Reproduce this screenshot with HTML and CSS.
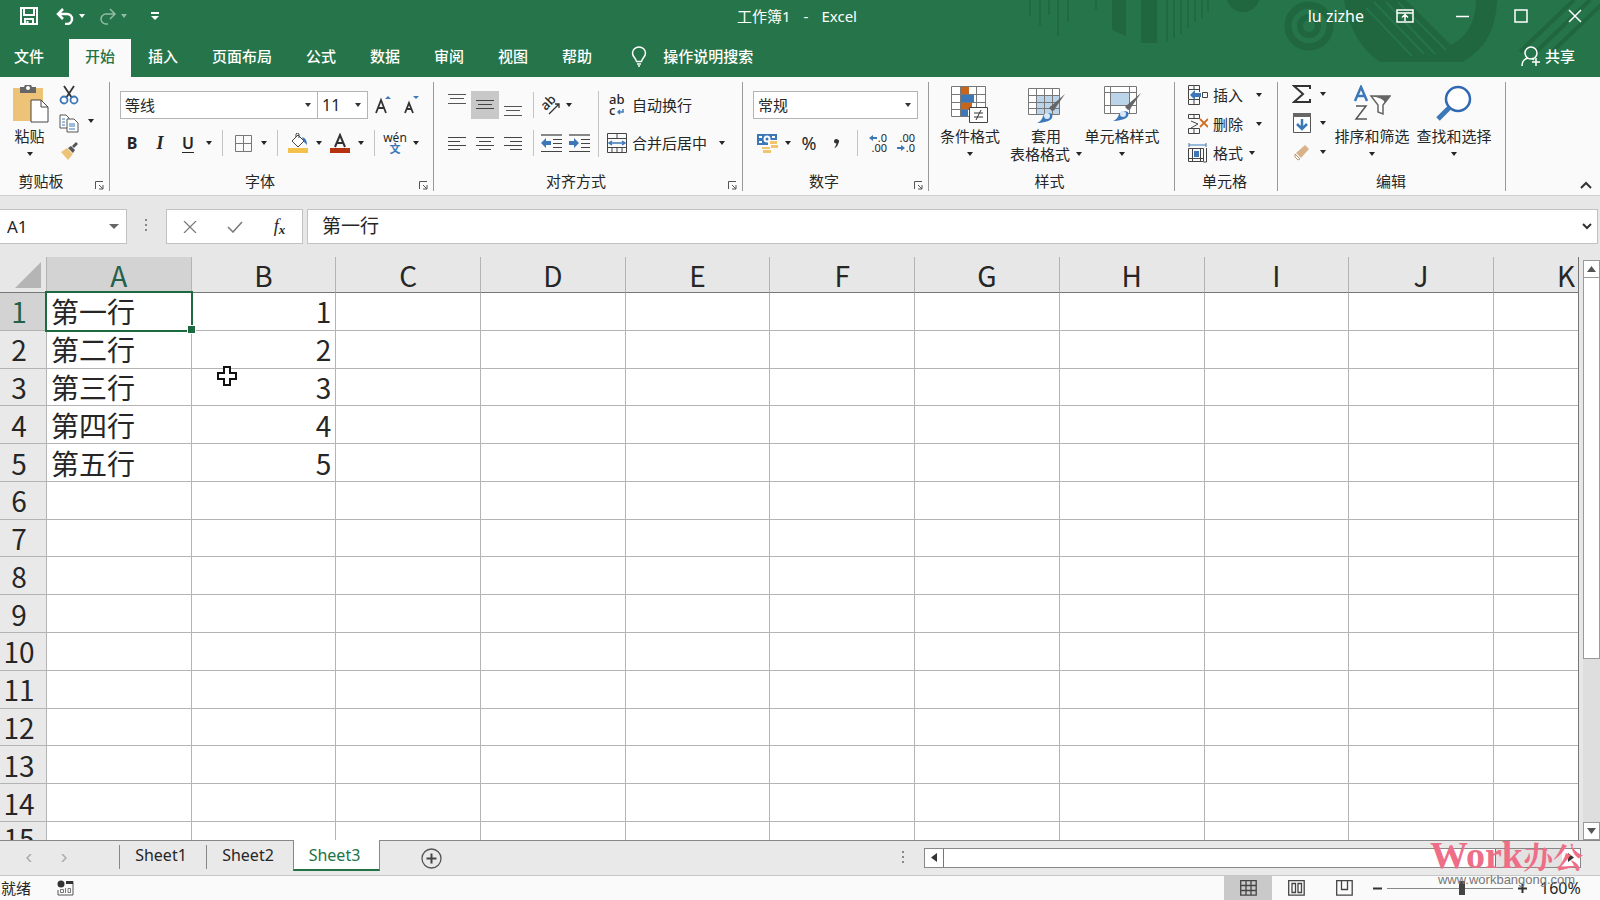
FILE: index.html
```html
<!DOCTYPE html>
<html lang="zh-CN">
<head>
<meta charset="utf-8">
<title>工作簿1 - Excel</title>
<link rel="stylesheet" href="styles.css">
</head>
<body>
<div class="app">
<header class="top">
  <svg class="pattern" width="680" height="77" viewBox="0 0 680 77" aria-hidden="true">
    <g fill="#20663e">
      <path d="M192 0h14v36l-14-6z"/><path d="M221 0h16v43h-16z"/>
      <circle cx="323" cy="-5" r="17"/>
      <path d="M424 0Q432 44 460 62H542Q576 44 577 0H556Q556 32 531 45L486 0z"/>
    </g>
    <g stroke="#20663e" stroke-width="1.500">
      <path d="M110 0v16M120 0v26M129 0v15M138 0v36M148 0v22M176 0v10M247 0v42M254 0v38M261 0v34M268 0v28M275 0v22M282 0v18M288 0v12"/>
    </g>
    <g fill="none" stroke="#20663e">
      <circle cx="389" cy="26" r="21" stroke-width="7"/><circle cx="389" cy="26" r="9" stroke-width="6"/>
      <path d="M600 52l54-52M616 52l54-52M632 52l54-52" stroke-width="4"/>
    </g>
    <path d="M446 8l46 48M454 2l50 52M466 2l49 52M478 2l48 48" fill="none" stroke="#26754a" stroke-width="2"/>
  </svg>
  <div class="titlebar">
    <div class="quick">
      <button class="save" aria-label="保存"><svg width="18" height="18" viewBox="0 0 18 18"><path d="M1 1h16v16H1zM4 1v7h10V1M5 17v-5h8v5M7.500 14v3" fill="none" stroke="#fff" stroke-width="2"/></svg></button>
      <button aria-label="撤消"><svg width="19" height="17" viewBox="0 0 19 17"><path d="M2 6h9a5 5 0 0 1 0 10h-2M7 1L2 6l5 5" fill="none" stroke="#fff" stroke-width="2.500"/></svg></button>
      <button class="dd" aria-label="撤消列表"><i class="arrow"></i></button>
      <button class="dim" aria-label="恢复"><svg width="19" height="17" viewBox="0 0 19 17"><path d="M17 6H8a5 5 0 0 0 0 10h2M12 1l5 5-5 5" fill="none" stroke="#fff" stroke-width="1.500"/></svg></button>
      <button class="dd dim" aria-label="恢复列表"><i class="arrow"></i></button>
      <button class="more" aria-label="自定义"><svg width="8" height="9" viewBox="0 0 8 9"><path d="M0 0h8v2H0zM0 4h8L4 8z" fill="#fff"/></svg></button>
    </div>
    <div class="doc"><span>工作簿1</span><span>-</span><span>Excel</span></div>
    <div class="window">
      <span class="user">lu zizhe</span>
      <button aria-label="功能区显示选项"><svg width="18" height="14" viewBox="0 0 18 14"><path d="M1 1h16v12H1zM1 4h16M9 12V6M6 8.500L9 5.500l3 3" fill="none" stroke="#fff" stroke-width="1.500"/></svg></button>
      <button aria-label="最小化"><svg width="14" height="14" viewBox="0 0 14 14"><path d="M0 7.500h13" stroke="#fff" stroke-width="1.500"/></svg></button>
      <button aria-label="最大化"><svg width="14" height="14" viewBox="0 0 14 14"><path d="M1 1h12v12H1z" fill="none" stroke="#fff" stroke-width="1.500"/></svg></button>
      <button aria-label="关闭"><svg width="14" height="14" viewBox="0 0 14 14"><path d="M1 1l12 12M13 1L1 13" stroke="#fff" stroke-width="1.500"/></svg></button>
    </div>
  </div>
  <nav class="tabs">
    <button class="file">文件</button><button class="on">开始</button><button>插入</button><button>页面布局</button><button>公式</button><button>数据</button><button>审阅</button><button>视图</button><button>帮助</button>
    <button class="tell"><svg width="16" height="21" viewBox="0 0 16 21"><path d="M5.500 15.500C5 12 1.500 11 1.500 7a6.500 6 0 0 1 13 0c0 4-3.500 5-4 8.500zM6 18h4M7 20h2" fill="none" stroke="#fff" stroke-width="1.500"/></svg>操作说明搜索</button>
    <button class="share"><svg width="20" height="21" viewBox="0 0 20 21"><g fill="none" stroke="#fff" stroke-width="1.500"><circle cx="10" cy="7" r="6"/><path d="M1 20c0-4 2-7 6-8M11 12l2 2M15 12v8M11 16h8"/></g></svg>共享</button>
  </nav>
</header>

<section class="ribbon">
  <div class="group g-clip">
    <div class="big-row">
      <button class="big paste"><svg width="38" height="38" viewBox="0 0 38 38"><path d="M2 3h30v33H2z" fill="#edc477"/><path d="M9 2h16v6H9z" fill="#666"/><circle cx="17" cy="3" r="3" fill="#fff" stroke="#666" stroke-width="2"/><path d="M20 15h10l7 7v15H20z" fill="#fff" stroke="#444"/><path d="M30 15v7h7" fill="none" stroke="#444"/></svg>粘贴<i class="arrow"></i></button>
      <div class="stack">
        <button aria-label="剪切"><svg width="20" height="20" viewBox="0 0 20 20"><path d="M5 1l8 12M15 1L7 13" stroke="#333" stroke-width="1.800"/><g fill="none" stroke="#3c78b8" stroke-width="1.800"><circle cx="5" cy="15" r="3.500"/><circle cx="15" cy="15" r="3.500"/></g></svg></button>
        <button aria-label="复制"><svg width="20" height="20" viewBox="0 0 20 20"><g fill="#fff" stroke="#555"><path d="M1 2h6l3 3v10H1z"/><path d="M8 6h7l4 4v9H8z"/></g><path d="M3 6h3M3 9h3M3 12h3M10 11h6M10 13h6M10 16h6" stroke="#3c78b8"/></svg></button>
        <button aria-label="格式刷"><svg width="20" height="20" viewBox="0 0 20 20"><path d="M2 11l6-4 6 6-5 6z" fill="#edc477"/><path d="M9 7l3-2 4 4-2 3zM13 5l4-4 2 2-4 4z" fill="#555"/></svg></button>
      </div>
      <button class="dd copydd" aria-label="复制选项"><i class="arrow"></i></button>
    </div>
    <h2>剪贴板</h2><button class="launch" aria-label="剪贴板设置"><svg width="9" height="9" viewBox="0 0 9 9"><path d="M.5 8V.5H8M4 4l4 4M8 4v4H4" fill="none" stroke="#555"/></svg></button>
  </div>

  <div class="group g-font">
    <div class="row combos">
      <select class="fontname" aria-label="字体"><option>等线</option></select><select class="fontsize" aria-label="字号"><option>11</option></select>
      <button class="ic grow" aria-label="增大字号"><svg width="20" height="20" viewBox="0 0 20 20"><path d="M2 18L7 5l5 13M4 13h6" fill="none" stroke="#333" stroke-width="1.800"/><path d="M11 4h6l-3-3z" fill="#3c78b8"/></svg></button>
      <button class="ic" aria-label="减小字号"><svg width="20" height="20" viewBox="0 0 20 20"><path d="M3 18L7 8l4 10M4 14h6" fill="none" stroke="#333" stroke-width="1.800"/><path d="M11 1h6l-3 3z" fill="#3c78b8"/></svg></button>
    </div>
    <div class="row">
      <button class="ic bold">B</button><button class="ic ital">I</button><button class="ic under">U</button><button class="dd" aria-label="下划线选项"><i class="arrow"></i></button><i class="sep"></i>
      <button class="ic" aria-label="边框"><svg width="17" height="17" viewBox="0 0 17 17"><path d="M.5.5h16v16H.5zM8.500 0v17M0 8.500h17" fill="none" stroke="#777"/></svg></button><button class="dd" aria-label="边框选项"><i class="arrow"></i></button><i class="sep"></i>
      <button class="ic" aria-label="填充颜色"><svg width="20" height="20" viewBox="0 0 20 20"><path d="M4 8l6-6 6 6-6 6zM8 4V1q1-2 3 0v4" fill="#fff" stroke="#444"/><path d="M14 4q5 1 5 8l-3-3z" fill="#3c78b8"/><path d="M0 15h20v5H0z" fill="#f3c24c"/></svg></button><button class="dd" aria-label="填充选项"><i class="arrow"></i></button>
      <button class="ic" aria-label="字体颜色"><svg width="20" height="20" viewBox="0 0 20 20"><path d="M5 14L10 2l5 12M7 10h6" fill="none" stroke="#333" stroke-width="2"/><path d="M0 15h20v5H0z" fill="#b5330f"/></svg></button><button class="dd" aria-label="颜色选项"><i class="arrow"></i></button><i class="sep"></i>
      <button class="ic pinyin"><span>wén</span><b>文</b></button><button class="dd" aria-label="拼音选项"><i class="arrow"></i></button>
    </div>
    <h2>字体</h2><button class="launch" aria-label="字体设置"><svg width="9" height="9" viewBox="0 0 9 9"><path d="M.5 8V.5H8M4 4l4 4M8 4v4H4" fill="none" stroke="#555"/></svg></button>
  </div>

  <div class="group g-align">
    <div class="split">
      <div class="rows">
        <div class="row">
          <button class="ic" aria-label="顶端对齐"><svg width="18" height="28" viewBox="0 0 18 28"><path d="M0 3.500h18M2 7.500h14M0 12.500h18" stroke="#555"/></svg></button><button class="ic pressed" aria-label="垂直居中"><svg width="18" height="28" viewBox="0 0 18 28"><path d="M0 9.500h18M2 13.500h14M0 17.500h18" stroke="#444"/></svg></button><button class="ic" aria-label="底端对齐"><svg width="18" height="28" viewBox="0 0 18 28"><path d="M0 15.500h18M2 19.500h14M0 24.500h18" stroke="#555"/></svg></button><i class="sep"></i>
          <button class="ic slim slant" aria-label="方向"><span>ab</span><svg width="20" height="20" viewBox="0 0 20 20"><path d="M8 19L18 9M14 9h4v4" fill="none" stroke="#333" stroke-width="1.300"/></svg></button><button class="dd" aria-label="方向选项"><i class="arrow"></i></button>
        </div>
        <div class="row">
          <button class="ic" aria-label="左对齐"><svg width="18" height="14" viewBox="0 0 18 14"><path d="M0 1.500h18M0 5.500h12M0 9.500h18M0 13.500h12" stroke="#444"/></svg></button><button class="ic" aria-label="居中"><svg width="18" height="14" viewBox="0 0 18 14"><path d="M0 1.500h18M3 5.500h12M0 9.500h18M3 13.500h12" stroke="#444"/></svg></button><button class="ic" aria-label="右对齐"><svg width="18" height="14" viewBox="0 0 18 14"><path d="M0 1.500h18M6 5.500h12M0 9.500h18M6 13.500h12" stroke="#444"/></svg></button><i class="sep"></i>
          <button class="ic indent" aria-label="减少缩进"><svg width="21" height="18" viewBox="0 0 21 18"><path d="M0 1h21" stroke="#888" stroke-width="2"/><path d="M12 5.500h9M12 9.500h9M12 13.500h9M0 17.500h21" stroke="#444"/><path d="M0 9l5-5v3h5v4H5v3z" fill="#3c78b8"/></svg></button><button class="ic indent" aria-label="增加缩进"><svg width="21" height="18" viewBox="0 0 21 18"><path d="M0 1h21" stroke="#888" stroke-width="2"/><path d="M12 5.500h9M12 9.500h9M12 13.500h9M0 17.500h21" stroke="#444"/><path d="M10 9L5 4v3H0v4h5v3z" fill="#3c78b8"/></svg></button>
        </div>
      </div>
      <div class="rows second">
        <div class="row"><button class="txt"><span class="wrapicon">ab<br>c<svg width="7" height="6" viewBox="0 0 7 6"><path d="M6 0v3H1M3 1L1 3l2 2" fill="none" stroke="#3c78b8" stroke-width="1.500"/></svg></span>自动换行</button></div>
        <div class="row"><button class="txt"><svg width="20" height="20" viewBox="0 0 20 20"><path d="M.5.5h19v19H.5zM0 5.500h20M0 14.500h20M10 0v5M5 15v5M10 15v5M15 15v5" fill="none" stroke="#444"/><path d="M3 10h14M5 8l-3 2 3 2M15 8l3 2-3 2" fill="none" stroke="#3c78b8" stroke-width="1.500"/></svg>合并后居中</button><button class="dd merge" aria-label="合并选项"><i class="arrow"></i></button></div>
      </div>
    </div>
    <h2>对齐方式</h2><button class="launch" aria-label="对齐设置"><svg width="9" height="9" viewBox="0 0 9 9"><path d="M.5 8V.5H8M4 4l4 4M8 4v4H4" fill="none" stroke="#555"/></svg></button>
  </div>

  <div class="group g-num">
    <div class="row"><select class="numfmt" aria-label="数字格式"><option>常规</option></select></div>
    <div class="row">
      <button class="ic" aria-label="会计格式"><svg width="22" height="20" viewBox="0 0 22 20"><path d="M1 1h20v11H1z" fill="#3c78b8"/><path d="M3 3h3v2H3zM16 3h3v2h-3zM3 8h3v2H3z" fill="#fff"/><circle cx="11" cy="6" r="3.500" fill="#fff"/><circle cx="11" cy="6" r="1.500" fill="#3c78b8"/><path d="M12 7h10v13H6v-5h6z" fill="#fafafa"/><path d="M14 8h7v3h-7zM15 12h7v3h-7zM6 14h8v2H6zM7 17h8v3H7z" fill="#f0c66c"/></svg></button><button class="dd" aria-label="会计选项"><i class="arrow"></i></button><button class="ic pct">%</button><button class="ic comma" aria-label="千位分隔"><svg width="8" height="10" viewBox="0 0 8 10"><path d="M1 3a2.500 2.500 0 1 1 4.500 2Q5 8 2 10l-.5-.8Q3 8 3.500 5.500A2.500 2.500 0 0 1 1 3z" fill="#333"/></svg></button><i class="sep"></i>
      <button class="ic digits" aria-label="增加小数"><span><svg width="8" height="6" viewBox="0 0 8 6"><path d="M0 3l4-3v2h4v2H4v2z" fill="#3c78b8"/></svg>.0</span><span>.00</span></button><button class="ic digits" aria-label="减少小数"><span>.00</span><span><svg width="8" height="6" viewBox="0 0 8 6"><path d="M8 3L4 0v2H0v2h4v2z" fill="#3c78b8"/></svg>.0</span></button>
    </div>
    <h2>数字</h2><button class="launch" aria-label="数字设置"><svg width="9" height="9" viewBox="0 0 9 9"><path d="M.5 8V.5H8M4 4l4 4M8 4v4H4" fill="none" stroke="#555"/></svg></button>
  </div>

  <div class="group g-style">
    <div class="big-row">
      <button class="big"><svg width="38" height="38" viewBox="0 0 38 38"><path d="M.5 1.500h34v30H.5zM0 9.500h34M0 17.500h34M0 24.500h34M9.500 1v30M25.500 1v30" fill="#fff" stroke="#777"/><path d="M10 2h8v7h-8zM10 18h11v6H10z" fill="#c8651d"/><path d="M10 10h13v7H10zM10 25h7v6h-7z" fill="#3c78b8"/><path d="M18.500 22.500h18v15h-18z" fill="#fff" stroke="#444"/><path d="M23 28h9M23 32h9M30 25l-5 10" stroke="#333"/></svg>条件格式<i class="arrow"></i></button>
      <button class="big"><svg width="38" height="38" viewBox="0 0 38 38"><path d="M1.500 3.500h31v26h-31z" fill="#fff"/><path d="M10 10h22v19H10z" fill="#bcd4ea"/><path d="M1.500 3.500h31v26h-31zM1 10.500h31M1 17.500h31M1 23.500h31M9.500 3v26M17.500 3v26M25.500 3v26" fill="none" stroke="#777"/><path d="M38 9L27 25l-4-3L38 9z" fill="#666"/><path d="M25 26l-3-3 2-2 4 4z" fill="#666"/><path d="M10 38q5-2 6-7 4-5 9-2 3 8-15 9z" fill="#3c78b8"/><circle cx="20" cy="31" r="3" fill="#d7e8f7"/></svg>套用<span class="line">表格格式<i class="arrow"></i></span></button>
      <button class="big"><svg width="38" height="38" viewBox="0 0 38 38"><path d="M1.500 1.500h32v27h-32z" fill="#fff"/><path d="M8 8h18v12H8z" fill="#bcd4ea"/><path d="M1.500 1.500h32v27h-32zM1 7.500h32M1 20.500h32M7.500 1v27M26.500 1v27" fill="none" stroke="#777"/><path d="M38 8L27 24l-4-3L38 8z" fill="#666"/><path d="M25 25l-3-3 2-2 4 4z" fill="#666"/><path d="M10 36q5-2 6-7 4-5 9-2 3 8-15 9z" fill="#3c78b8"/><circle cx="20" cy="29" r="3" fill="#d7e8f7"/></svg>单元格样式<i class="arrow"></i></button>
    </div>
    <h2>样式</h2>
  </div>

  <div class="group g-cell">
    <div class="list">
      <div class="row"><button class="txt"><svg width="20" height="20" viewBox="0 0 20 20"><path d="M.5.5h11v4H.5zM.5 14.500h11v5H.5zM.5 4v10M6 0v4M6 15v4M11.500 4v3M11.500 12v3M14.500 7.500h5v5h-5z" fill="none" stroke="#444"/><path d="M2 10l5-5v3h6v4H7v3z" fill="#3c78b8"/></svg>插入</button><button class="dd far" aria-label="插入选项"><i class="arrow"></i></button></div>
      <div class="row"><button class="txt"><svg width="20" height="20" viewBox="0 0 20 20"><path d="M.5.5h11v4H.5zM.5 14.500h11v5H.5zM6 0v4M6 15v4M3 7l7 3-7 4" fill="none" stroke="#444"/><path d="M12 5l8 8M20 5l-8 8" stroke="#d36b24" stroke-width="1.800"/></svg>删除</button><button class="dd far" aria-label="删除选项"><i class="arrow"></i></button></div>
      <div class="row"><button class="txt"><svg width="20" height="20" viewBox="0 0 20 20"><path d="M.5 5.500h15v13H.5zM4.500 5v14M12.500 5v14M0 15.500h15M18.500 5v14h-3" fill="none" stroke="#444"/><path d="M6 8h5v6H6z" fill="#3c78b8"/><path d="M1 0v4M18 0v4M1 2h17" stroke="#3c78b8"/></svg>格式</button><button class="dd near" aria-label="格式选项"><i class="arrow"></i></button></div>
    </div>
    <h2>单元格</h2>
  </div>

  <div class="group g-edit">
    <div class="big-row">
      <div class="list">
        <div class="row"><button class="ic" aria-label="求和"><svg width="20" height="20" viewBox="0 0 20 20"><path d="M18 5V2H2l9 8-9 8h16v-3" fill="none" stroke="#333" stroke-width="2"/></svg></button><button class="dd" aria-label="求和选项"><i class="arrow"></i></button></div>
        <div class="row"><button class="ic" aria-label="填充"><svg width="18" height="20" viewBox="0 0 18 20"><path d="M.5.500h17v19H.5z" fill="#fff" stroke="#555"/><path d="M0 0h18v4H0z" fill="#666"/><path d="M9 6v10M4 11l5 5 5-5" fill="none" stroke="#3c78b8" stroke-width="2.500"/></svg></button><button class="dd" aria-label="填充选项"><i class="arrow"></i></button></div>
        <div class="row"><button class="ic" aria-label="清除"><svg width="18" height="18" viewBox="0 0 18 18"><path d="M3 10l9-8 4 4-8 9z" fill="#d9b28a"/><path d="M2 11l5 5-2 1-3-3z" fill="#fff" stroke="#b99774"/></svg></button><button class="dd" aria-label="清除选项"><i class="arrow"></i></button></div>
      </div>
      <button class="big wide"><svg width="38" height="38" viewBox="0 0 38 38"><path d="M2 16L8 2l6 14M4 11h8" fill="none" stroke="#3c78b8" stroke-width="2.500"/><path d="M3 21h10L3 34h11" fill="none" stroke="#555" stroke-width="1.500"/><path d="M18 11h19l-7 9v9l-5-2v-7z" fill="#fff" stroke="#666" stroke-width="1.500"/><path d="M18 11h19l-5 7q-1-5-14-7z" fill="#666"/></svg>排序和筛选<i class="arrow"></i></button>
      <button class="big wide"><svg width="38" height="38" viewBox="0 0 38 38"><circle cx="23" cy="14" r="12" fill="#fff" stroke="#3068b4" stroke-width="2.500"/><path d="M14 23L3 34" stroke="#3c78b8" stroke-width="5"/></svg>查找和选择<i class="arrow"></i></button>
    </div>
    <h2>编辑</h2>
  </div>
  <button class="collapse" aria-label="折叠功能区"><svg width="12" height="8" viewBox="0 0 12 8"><path d="M1 7l5-5 5 5" fill="none" stroke="#333" stroke-width="2"/></svg></button>
</section>

<section class="formula">
  <div class="namebox"><input value="A1" aria-label="名称框"><button aria-label="名称列表"><i class="arrow large"></i></button></div>
  <span class="grip"></span>
  <div class="fx">
    <button aria-label="取消"><svg width="14" height="12" viewBox="0 0 14 12"><path d="M1 0l12 12M13 0L1 12" stroke="#777" stroke-width="1.200"/></svg></button>
    <button aria-label="输入"><svg width="16" height="12" viewBox="0 0 16 12"><path d="M1 6l5 5L15 1" fill="none" stroke="#777" stroke-width="1.500"/></svg></button>
    <button class="fn" aria-label="插入函数"><i>f</i><sub>x</sub></button>
  </div>
  <div class="entry"><input value="第一行" aria-label="编辑栏"><button aria-label="展开编辑栏"><svg width="10" height="7" viewBox="0 0 10 7"><path d="M1 1l4 4 4-4" fill="none" stroke="#333" stroke-width="2"/></svg></button></div>
</section>

<main class="sheet">
  <div class="gridwrap">
    <table class="grid">
      <thead><tr><th class="corner"><svg width="26" height="26" viewBox="0 0 26 26"><path d="M26 0v26H0z" fill="#b5b5b5"/></svg></th><th class="sel">A</th><th>B</th><th>C</th><th>D</th><th>E</th><th>F</th><th>G</th><th>H</th><th>I</th><th>J</th><th class="last">K</th></tr></thead>
      <tbody id="cells"></tbody>
    </table>
    <svg class="cursor" width="20" height="20" viewBox="0 0 20 20"><path d="M7 1h6v6h6v6h-6v6H7v-6H1V7h6z" fill="#fff" stroke="#111" stroke-width="2"/></svg>
  </div>
  <div class="vscroll">
    <button aria-label="向上"><svg width="9" height="6" viewBox="0 0 9 6"><path d="M0 6h9L4.500 0z" fill="#555"/></svg></button>
    <div class="vtrack"><div class="vthumb"></div></div>
    <button aria-label="向下"><svg width="9" height="6" viewBox="0 0 9 6"><path d="M0 0h9L4.500 6z" fill="#555"/></svg></button>
  </div>
</main>

<footer>
  <div class="sheets">
    <button class="nav" aria-label="上一张"><svg width="6" height="8" viewBox="0 0 6 8"><path d="M5 0L1 4l4 4" fill="none" stroke="#aaa" stroke-width="1.500"/></svg></button>
    <button class="nav" aria-label="下一张"><svg width="6" height="8" viewBox="0 0 6 8"><path d="M1 0l4 4-4 4" fill="none" stroke="#aaa" stroke-width="1.500"/></svg></button>
    <button class="tab first">Sheet1</button><button class="tab">Sheet2</button><button class="tab active-tab">Sheet3</button>
    <button class="add" aria-label="新工作表"><svg width="21" height="21" viewBox="0 0 21 21"><circle cx="10.500" cy="10.500" r="9.500" fill="none" stroke="#555" stroke-width="1.300"/><path d="M10.500 5.500v10M5.500 10.500h10" stroke="#444" stroke-width="2"/></svg></button>
    <span class="grip right"></span>
    <div class="hscroll"><button aria-label="向左"><svg width="6" height="9" viewBox="0 0 6 9"><path d="M6 0v9L0 4.500z" fill="#333"/></svg></button><div class="hthumb"></div><div class="hrest"></div><button aria-label="向右"><svg width="6" height="9" viewBox="0 0 6 9"><path d="M0 0v9l6-4.500z" fill="#333"/></svg></button></div>
  </div>
  <div class="status">
    <span>就绪</span>
    <svg class="macro" width="17" height="16" viewBox="0 0 17 16"><circle cx="4" cy="4" r="3.500" fill="#333"/><path d="M9 1.500h7v13.500H1v-5" fill="none" stroke="#555"/><path d="M9 1h7v3H9z" fill="#333"/><path d="M3.500 9.500h3v3h-3zM8.500 8v5M11 8.500h2.500v4H11z" fill="none" stroke="#777"/></svg>
    <div class="views">
      <button class="on" aria-label="普通"><svg width="17" height="16" viewBox="0 0 17 16"><path d="M.7.700h15.500v14.500H.7zM1 5.500h15M1 10.500h15M6 1v14M11 1v14" fill="none" stroke="#444" stroke-width="1.300"/></svg></button>
      <button aria-label="页面布局"><svg width="17" height="16" viewBox="0 0 17 16"><path d="M.7.700h15.500v14.500H.7zM4 3.500h3.500v9H4zM10 3.500h3.500v9H10z" fill="none" stroke="#444" stroke-width="1.300"/></svg></button>
      <button aria-label="分页预览"><svg width="17" height="16" viewBox="0 0 17 16"><path d="M.7.700h15.500v14.500H.7zM5.500 1v8.500h6V1" fill="none" stroke="#444" stroke-width="1.300"/></svg></button>
    </div>
    <button class="zoom" aria-label="缩小"><svg width="9" height="9" viewBox="0 0 9 9"><path d="M0 4.500h9" stroke="#333" stroke-width="2"/></svg></button>
    <input type="range" min="0" max="100" value="60" aria-label="缩放">
    <button class="zoom" aria-label="放大"><svg width="9" height="9" viewBox="0 0 9 9"><path d="M0 4.500h9M4.500 0v9" stroke="#333" stroke-width="2"/></svg></button>
    <span class="percent">160%</span>
  </div>
  <div class="mark"><div class="brand">Work<span>办公</span></div><div class="site">www.workbangong.com</div></div>
</footer>
</div>
<script src="grid.js"></script>
</body>
</html>
```
FILE: grid.js
```js
const labels = ["第一行", "第二行", "第三行", "第四行", "第五行"];
const body = document.getElementById("cells");
for (let r = 1; r <= 15; r++) {
  const tr = document.createElement("tr");
  if (r === 15) tr.className = "cut";
  const th = document.createElement("th");
  th.innerHTML = "<span>" + r + "</span>";
  if (r === 1) th.className = "sel";
  tr.append(th);
  for (let c = 0; c < 11; c++) {
    const td = document.createElement("td");
    if (labels[r - 1] && c === 0) td.textContent = labels[r - 1];
    if (labels[r - 1] && c === 1) {
      td.textContent = r;
      td.className = "num";
    }
    if (r === 1 && c === 0) td.className = "active";
    tr.append(td);
  }
  body.append(tr);
}
```
FILE: styles.css
```css
* { box-sizing: border-box; }
body { margin: 0; font: 15px/18px "Noto Sans", "Noto Sans CJK SC", sans-serif; color: #262626; }
button, input, select { font: inherit; color: inherit; border: 0; background: none; padding: 0; margin: 0; border-radius: 0; outline: 0; }
button { display: flex; align-items: center; justify-content: center; white-space: nowrap; flex: none; }
svg { display: block; flex: none; }
.app { height: 100vh; display: flex; flex-direction: column; overflow: hidden; background: #e7e7e7; }

.top { position: relative; background: #26754a; color: #fff; flex: none; }
.pattern { position: absolute; right: 0; top: 0; }
.titlebar { position: relative; display: grid; grid-template-columns: 1fr auto 1fr; height: 39px; padding-bottom: 7px; align-items: center; }
.quick { display: flex; align-items: center; padding-left: 20px; }
.quick .save { margin-right: 18px; }
.quick .dim { opacity: 0.5; }
.quick .more { margin-left: 11px; }
.quick .dd { margin-right: 9px; }
.doc { display: flex; gap: 13px; padding-right: 6px; }
.window { display: flex; justify-content: flex-end; align-items: center; }
.window button { width: 58px; height: 30px; }
.window button:last-child { width: 50px; }
.user { margin-right: 12px; font-size: 16px; }
.arrow { display: block; width: 0; height: 0; border: 3px solid transparent; border-top: 4px solid currentColor; border-bottom: 0; }
.arrow.large { border-width: 5px 5px 0; color: #666; }
.dd { width: 14px; height: 28px; }

.tabs { position: relative; display: flex; height: 38px; font-weight: 500; }
.tabs button { padding: 0 17px; padding-bottom: 4px; }
.tabs .file { width: 69px; justify-content: flex-start; padding-left: 14px; }
.tabs .on { padding: 0 16px 4px; background: #fafafa; color: #217346; }
.tabs .tell { gap: 16px; padding-left: 22px; }
.tabs .share { margin-left: auto; gap: 4px; padding-right: 25px; }

.ribbon { position: relative; display: flex; height: 119px; flex: none; background: #fafafa; border-bottom: 1px solid #cfcfcf; }
.group { position: relative; display: flex; flex-direction: column; padding-top: 14px; flex: none; }
.group > .row + .row { margin-top: 10px; }
.group::after { content: ""; position: absolute; right: 0; top: 5px; bottom: 4px; width: 1px; background: #999; }
.group h2 { font: inherit; margin: auto 0 5px; text-align: center; }
.launch { position: absolute; right: 6px; bottom: 5px; }
.row { display: flex; align-items: center; height: 28px; }
.ic { width: 28px; height: 28px; }
.slim { width: 22px; }
.sep { width: 1px; height: 26px; margin: 0 6px; background: #c4c4c4; }
.big-row { display: flex; margin-top: -6px; }
.big { flex-direction: column; justify-content: flex-start; height: 78px; width: 76px; }
.big svg { margin-bottom: 4px; }
.big > .arrow { margin-top: 7px; }
.line { display: flex; align-items: center; gap: 6px; }
.txt { gap: 5px; }
.pressed { background: #c8c8c8; }
.slant { position: relative; }
.slant span { position: absolute; left: 0; top: 4px; font: 500 13px/14px "Noto Sans", sans-serif; transform: rotate(-45deg); }
.wrapicon { width: 20px; padding-left: 2px; text-align: left; font: 500 13px/11px "Noto Sans", sans-serif; }
.wrapicon svg { display: inline-block; margin-left: 2px; }
.digits { flex-direction: column; align-items: flex-end; padding-right: 5px; font: 11px/10px "Noto Sans", sans-serif; }
.digits span { display: flex; align-items: center; gap: 1px; }

.g-clip { width: 110px; }
.g-clip h2 { padding-right: 28px; }
.paste { width: 59px; }
.stack { display: flex; flex-direction: column; gap: 8px; }
.copydd { margin: 22px 0 0 5px; }
.g-font { width: 324px; padding-left: 8px; }
.g-font h2 { padding-right: 32px; }
.combos { padding-left: 2px; }
select { appearance: none; height: 28px; border: 1px solid #b4b4b4; padding: 0 4px; background: #fff url("data:image/svg+xml,%3Csvg xmlns='http://www.w3.org/2000/svg' width='6' height='4'%3E%3Cpath d='M0 0h6L3 4z' fill='%23333'/%3E%3C/svg%3E") no-repeat right 6px center; }
.fontname { width: 198px; }
.fontsize { width: 50px; border-left: 0; font-size: 16px; }
.grow { margin-left: 2px; }
.bold { font-weight: 700; font-size: 16px; }
.ital { font: italic 700 18px "Liberation Serif", serif; }
.under { text-decoration: underline; text-underline-offset: 3px; font-weight: 600; font-size: 16px; }
.pinyin { flex-direction: column; font-size: 12px; line-height: 10px; }
.pinyin b { color: #3c78b8; font-size: 11px; line-height: 11px; }
.g-align { width: 309px; padding-left: 9px; }
.g-align h2 { padding-right: 34px; }
.split { display: flex; }
.rows { display: flex; flex-direction: column; gap: 10px; }
.second { margin-left: 2px; padding-left: 8px; border-left: 1px solid #c4c4c4; }
.indent { justify-content: flex-start; padding-left: 1px; }
.merge { margin-left: 8px; }
.g-num { width: 186px; padding-left: 10px; }
.g-num h2 { padding-right: 34px; }
.numfmt { width: 165px; }
.pct { font-size: 18px; }
.g-style { width: 246px; padding-left: 3px; }
.g-style h2 { padding-right: 8px; }
.g-cell { width: 103px; padding-left: 13px; }
.g-cell h2 { padding-right: 17px; }
.list { display: flex; flex-direction: column; gap: 1px; margin-top: -10px; }
.g-cell .list, .g-edit .list { margin-bottom: -10px; }
.g-edit .list { margin-top: -5px; }
.far { margin-left: 9px; }
.near { margin-left: 2px; }
.g-edit { width: 228px; padding-left: 10px; }
.g-edit h2 { padding-right: 12px; }
.g-edit .list { width: 43px; }
.wide { width: 82px; }
.collapse { position: absolute; right: 8px; bottom: 6px; }

.formula { display: flex; flex: none; height: 61px; padding: 13px 2px 13px 0; }
.namebox, .fx, .entry { display: flex; background: #fff; border: 1px solid #c2c2c2; align-items: stretch; }
.namebox { width: 127px; border-left: 0; padding: 0 7px; }
.namebox input { flex: 1; min-width: 0; font-size: 17px; }
.grip { width: 3px; margin: 10px 18px; background: radial-gradient(circle at 1px 1px, #888 1px, transparent 1px) 0 0 / 3px 5px; }
.fx { width: 137px; }
.fx button { width: 45px; }
.fn { font: 18px "Liberation Serif", serif; }
.fn sub { font: italic 700 13px "Liberation Serif", serif; padding-top: 6px; }
.entry { flex: 1; margin-left: 4px; padding: 0 5px 0 14px; }
.entry input { flex: 1; min-width: 0; font-size: 19px; padding-bottom: 3px; }

.sheet { display: flex; flex: 1; min-height: 0; }
.gridwrap { position: relative; flex: 1; min-width: 0; height: 100%; border-right: 1px solid #777; overflow: hidden; }
.grid { table-layout: fixed; width: 100%; height: 100%; border-collapse: separate; border-spacing: 0; font: 28px/32px "Noto Sans CJK SC", sans-serif; }
.grid th, .grid td { padding: 0; font-weight: 400; border-right: 1px solid #b4b4b4; border-bottom: 1px solid #b4b4b4; white-space: nowrap; }
.grid thead th { height: 36px; border-bottom-color: #777; background: #e7e7e7; }
.grid thead .corner { width: 47px; }
.grid .corner svg { margin-left: 15px; }
.grid thead .last { width: 84px; text-align: right; padding-right: 3px; border-right: 0; }
.grid tbody th { background: #e9e9e9; padding-right: 8px; }
.grid thead .sel, .grid tbody .sel { background: #d3d3d3; color: #24604a; }
.grid td { background: #fff; padding: 0 4px; }
.grid td:last-child { border-right: 0; }
.grid .num { text-align: right; }
.cut { height: 18px; }
.grid .cut th, .grid .cut td { border-bottom: 0; }
.cut span { display: block; height: 18px; overflow: hidden; }
.active { position: relative; }
.active::before { content: ""; position: absolute; inset: -2px; border: 2px solid #1c6a40; }
.active::after { content: ""; position: absolute; right: -4px; bottom: -3px; width: 7px; height: 7px; background: #1c6a40; outline: 1px solid #fff; }
.cursor { position: absolute; left: 217px; top: 109px; }
.vscroll { display: flex; flex-direction: column; width: 17px; margin-left: 4px; padding-top: 3px; }
.vscroll button { height: 18px; background: #fff; border: 1px solid #999; }
.vtrack { flex: 1; background: #dedede; }
.vthumb { height: 70%; background: #fff; border: 1px solid #999; border-top: 0; }

footer { position: relative; flex: none; }
.sheets { display: flex; height: 35px; border-top: 1px solid #888; font-size: 16px; padding-right: 19px; align-items: center; background: #e9e9e9; }
.nav { width: 35px; }
.nav:first-child { margin-left: 11px; }
.tab { align-self: flex-start; width: 87px; height: 24px; margin-top: 4px; padding: 0 4px 4px 0; border-right: 1px solid #888; }
.first { margin-left: 38px; width: 88px; border-left: 1px solid #888; }
.active-tab { height: 31px; margin: -1px 0 0 -1px; padding: 0 4px 0 0; background: #fff; color: #217346; border-left: 1px solid #888; border-bottom: 2px solid #217346; }
.add { margin-left: 41px; }
.grip.right { align-self: stretch; margin: 10px 19px 10px auto; }
.hscroll { display: flex; width: 657px; height: 20px; margin-bottom: 1px; border: 1px solid #888; }
.hscroll button { width: 18px; background: #fff; }
.hthumb { flex: 1; background: #fff; border: solid #777; border-width: 0 1px; }
.hrest { width: 66px; background: #e2e2e2; }
.status { display: flex; align-items: center; height: 25px; background: #fafafa; border-top: 1px solid #c6c6c6; padding: 0 20px 0 1px; }
.macro { margin-left: 26px; }
.views { display: flex; margin-left: auto; align-self: stretch; margin-right: 5px; }
.views button { width: 48px; }
.views .on { background: #c9c9c9; }
.zoom { width: 9px; }
.status input { appearance: none; width: 126px; height: 16px; margin: 0 5px; background: linear-gradient(#888, #888) center / 100% 1px no-repeat; }
.status input::-webkit-slider-thumb { appearance: none; width: 6px; height: 14px; background: #444; }
.percent { margin-left: 13px; width: 40px; font-size: 16px; }
.mark { position: absolute; right: 17px; top: -4px; color: #ee6e87; pointer-events: none; text-align: center; }
.brand { font: 700 38px/38px "Liberation Serif", serif; white-space: nowrap; }
.brand span { font: 700 30px/38px "Noto Serif CJK SC", "Noto Sans CJK SC", sans-serif; }
.site { font: 13px/12px "Liberation Sans", sans-serif; color: #777; }
```
